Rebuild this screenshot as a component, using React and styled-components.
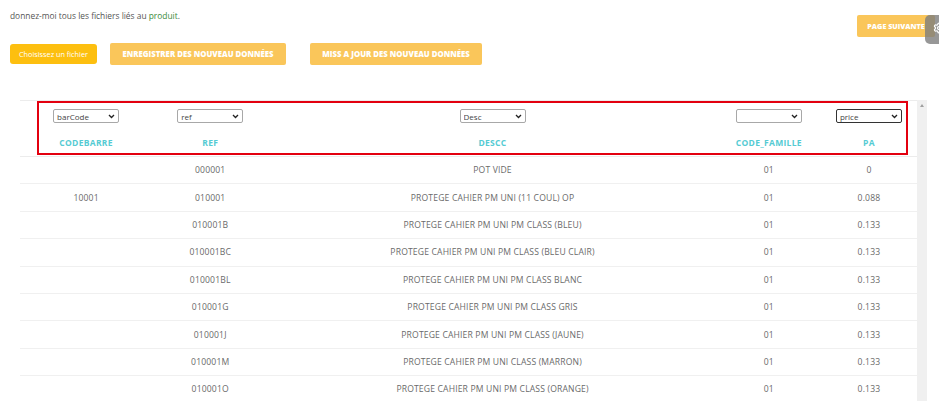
import React from "react";
import styled, { createGlobalStyle } from "styled-components";
import { Settings } from "lucide-react";

const columns = [
  { key: "code", label: "CODEBARRE", option: "barCode", width: 132 },
  { key: "ref", label: "REF", option: "ref", width: 116 },
  { key: "desc", label: "DESCC", option: "Desc", width: 448 },
  { key: "fam", label: "CODE_FAMILLE", option: "", width: 104 },
  { key: "pa", label: "PA", option: "price", width: 96, focused: true },
];

const rows = [
  { code: "", ref: "000001", desc: "POT VIDE", fam: "01", pa: "0" },
  { code: "10001", ref: "010001", desc: "PROTEGE CAHIER PM UNI (11 COUL) OP", fam: "01", pa: "0.088" },
  { code: "", ref: "010001B", desc: "PROTEGE CAHIER PM UNI PM CLASS (BLEU)", fam: "01", pa: "0.133" },
  { code: "", ref: "010001BC", desc: "PROTEGE CAHIER PM UNI PM CLASS (BLEU CLAIR)", fam: "01", pa: "0.133" },
  { code: "", ref: "010001BL", desc: "PROTEGE CAHIER PM UNI PM CLASS BLANC", fam: "01", pa: "0.133" },
  { code: "", ref: "010001G", desc: "PROTEGE CAHIER PM UNI PM CLASS GRIS", fam: "01", pa: "0.133" },
  { code: "", ref: "010001J", desc: "PROTEGE CAHIER PM UNI PM CLASS (JAUNE)", fam: "01", pa: "0.133" },
  { code: "", ref: "010001M", desc: "PROTEGE CAHIER PM UNI CLASS (MARRON)", fam: "01", pa: "0.133" },
  { code: "", ref: "010001O", desc: "PROTEGE CAHIER PM UNI PM CLASS (ORANGE)", fam: "01", pa: "0.133" },
];

function Chevron() {
  return (
    <ChevronIcon viewBox="0 0 8 6" width="7" height="5">
      <path d="M1 1.2 L4 4.2 L7 1.2" fill="none" stroke="#222" strokeWidth="1.6" />
    </ChevronIcon>
  );
}

export default function App() {
  return (
    <Page>
      <GlobalStyle />
      <TopBar>
        <div>
          <Intro>
            donnez-moi tous les fichiers liés au <Green>produit</Green>.
          </Intro>
          <ButtonRow>
            <FileButton>Choisissez un fichier</FileButton>
            <ActionButton>ENREGISTRER DES NOUVEAU DONNÉES</ActionButton>
            <ActionButton $narrow>MISS A JOUR DES NOUVEAU DONNÉES</ActionButton>
          </ButtonRow>
        </div>
        <NextButton>PAGE SUIVANTE</NextButton>
      </TopBar>
      <SideTab>
        <Settings size={12} color="#fff" strokeWidth={2.5} />
      </SideTab>

      <TableWrap>
        <TableArea>
          <Table>
            <colgroup>
              {columns.map((c) => (
                <col key={c.key} style={{ width: c.width }} />
              ))}
            </colgroup>
            <thead>
              <tr>
                {columns.map((c) => (
                  <Th key={c.key}>
                    <SelectBox>
                      <Select $focused={c.focused} defaultValue={c.option}>
                        <option value={c.option}>{c.option}</option>
                      </Select>
                      <Chevron />
                    </SelectBox>
                    <HeadLabel>{c.label}</HeadLabel>
                  </Th>
                ))}
              </tr>
            </thead>
            <tbody>
              {rows.map((r) => (
                <tr key={r.ref}>
                  {columns.map((c) => (
                    <Td key={c.key}>{r[c.key]}</Td>
                  ))}
                </tr>
              ))}
            </tbody>
          </Table>
          <Highlight />
        </TableArea>
        <ScrollTrack>
          <ScrollArrow />
        </ScrollTrack>
      </TableWrap>
    </Page>
  );
}

const GlobalStyle = createGlobalStyle`
  body {
    margin: 0;
    background: #ffffff;
    font-family: "Open Sans", "DejaVu Sans", sans-serif;
  }
`;

const Page = styled.div`
  position: relative;
  width: 939px;
  height: 419px;
  overflow: hidden;
  background: #fff;
`;

const TopBar = styled.div`
  display: flex;
  justify-content: space-between;
  align-items: flex-start;
  padding: 0 4px 0 10px;
`;

const Intro = styled.p`
  margin: 9px 0 0;
  font-size: 8.4px;
  color: #555;
  line-height: 13px;
`;

const Green = styled.span`
  color: #3a8a3a;
`;

const ButtonRow = styled.div`
  display: flex;
  align-items: center;
  margin-top: 21px;
`;

const FileButton = styled.button`
  height: 20px;
  width: 87px;
  padding: 0;
  border: none;
  border-radius: 3px;
  background: #fdbf0f;
  color: #fff;
  font-family: inherit;
  font-size: 7.3px;
  margin-right: 13px;
`;

const ActionButton = styled.button`
  height: 22px;
  width: ${({ $narrow }) => ($narrow ? "172px" : "176px")};
  padding: 0;
  border: none;
  border-radius: 2px;
  background: #fac65a;
  color: #fff;
  font-family: inherit;
  font-weight: 800;
  font-size: 7.8px;
  margin-right: 24px;
`;

const NextButton = styled.button`
  margin-top: 15px;
  height: 22px;
  width: 78px;
  padding: 0;
  border: none;
  border-radius: 2px;
  background: #fac65a;
  color: #fff;
  font-family: inherit;
  font-weight: 800;
  font-size: 7.2px;
`;

const SideTab = styled.div`
  position: absolute;
  left: 925px;
  top: 15px;
  width: 30px;
  height: 29px;
  border-radius: 5px 0 0 5px;
  background: rgba(125, 125, 125, 0.8);
  display: flex;
  align-items: center;
  padding: 0 0 4px 8px;
  box-sizing: border-box;
`;

const TableWrap = styled.div`
  display: flex;
  margin: 35px 0 0 20px;
  width: 907px;
  height: 301px;
`;

const TableArea = styled.div`
  position: relative;
  flex: 1;
  overflow: hidden;
`;

const Table = styled.table`
  width: 100%;
  table-layout: fixed;
  border-collapse: collapse;
  border-top: 1px solid #ececec;
`;

const Th = styled.th`
  height: 47px;
  padding: 8px 0 0;
  vertical-align: top;
  text-align: center;
  border-bottom: 1px solid #ececec;
`;

const SelectBox = styled.div`
  position: relative;
  width: 66px;
  height: 14px;
  margin: 0 auto;
`;

const Select = styled.select`
  appearance: none;
  display: block;
  width: 100%;
  height: 100%;
  padding: 0 0 0 3px;
  font-family: inherit;
  font-size: 8px;
  color: #444;
  background: #fff;
  border: ${({ $focused }) => ($focused ? "1.5px solid #333" : "1px solid #a8a8a8")};
  border-radius: 2px;
  box-sizing: border-box;
`;

const ChevronIcon = styled.svg`
  position: absolute;
  right: 4px;
  top: 5px;
  pointer-events: none;
`;

const HeadLabel = styled.div`
  margin-top: 14px;
  font-size: 8.5px;
  font-weight: 700;
  color: #55cbd3;
  letter-spacing: 0.3px;
`;

const Td = styled.td`
  height: 26.4px;
  padding: 0;
  text-align: center;
  font-size: 8.6px;
  color: #6a6a6a;
  letter-spacing: 0.15px;
  border-bottom: 1.5px solid #f0f0f0;
`;

const Highlight = styled.div`
  position: absolute;
  left: 17px;
  top: 1px;
  width: 871px;
  height: 54px;
  border: 2px solid #e3000f;
  box-sizing: border-box;
  pointer-events: none;
`;

const ScrollTrack = styled.div`
  width: 10px;
  background: #f0f0f0;
  display: flex;
  justify-content: center;
  padding-top: 4px;
  box-sizing: border-box;
`;

const ScrollArrow = styled.div`
  width: 0;
  height: 0;
  border-left: 2px solid transparent;
  border-right: 2px solid transparent;
  border-bottom: 3px solid #a0a0a0;
`;
